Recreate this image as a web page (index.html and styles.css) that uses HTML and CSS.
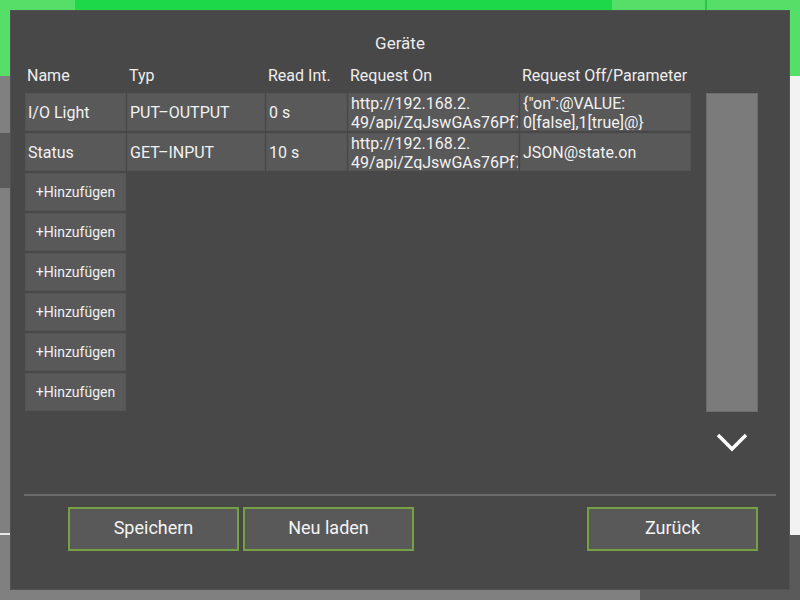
FILE: index.html
```html
<!DOCTYPE html>
<html lang="de">
<head>
    <meta charset="UTF-8">
    <title>Geräte</title>
    <link rel="stylesheet" href="styles.css">
</head>
<body>
    <div class="desk">
        <div class="bar-top"></div>
        <div class="bar-top-active"></div>
        <div class="bar-top-sep"></div>
        <div class="side-left"></div>
        <div class="side-left-line"></div>
        <div class="side-right"></div>
        <div class="side-right-low"></div>

        <div class="dialog">
            <div class="title">Geräte</div>

            <div class="table-head">
                <div class="th">Name</div>
                <div class="th">Typ</div>
                <div class="th">Read Int.</div>
                <div class="th">Request On</div>
                <div class="th">Request Off/Parameter</div>
            </div>

            <div class="table-area">
                <div class="table">
                    <div class="cell">I/O Light</div>
                    <div class="cell">PUT–OUTPUT</div>
                    <div class="cell">0 s</div>
                    <div class="cell cell-multi"><span>http://192.168.2.</span><span>49/api/ZqJswGAs76Pf7</span></div>
                    <div class="cell cell-multi"><span>{"on":@VALUE:</span><span>0[false],1[true]@}</span></div>

                    <div class="cell">Status</div>
                    <div class="cell">GET–INPUT</div>
                    <div class="cell">10 s</div>
                    <div class="cell cell-multi"><span>http://192.168.2.</span><span>49/api/ZqJswGAs76Pf7</span></div>
                    <div class="cell">JSON@state.on</div>

                    <div class="cell add">+Hinzufügen</div>
                    <div class="cell add">+Hinzufügen</div>
                    <div class="cell add">+Hinzufügen</div>
                    <div class="cell add">+Hinzufügen</div>
                    <div class="cell add">+Hinzufügen</div>
                    <div class="cell add">+Hinzufügen</div>
                </div>

                <div class="scroll-col">
                    <div class="scrollbar"></div>
                    <svg class="chevron" width="32" height="20" viewBox="0 0 32 20">
                        <polyline points="2,2 16,16 30,2" fill="none" stroke="#fff" stroke-width="3.5"/>
                    </svg>
                </div>
            </div>

            <div class="separator"></div>

            <div class="buttons">
                <button class="btn">Speichern</button>
                <button class="btn">Neu laden</button>
                <span class="spacer"></span>
                <button class="btn">Zurück</button>
            </div>
        </div>
    </div>
</body>
</html>
```

FILE: styles.css
```css
body {
    margin: 0;
    padding: 0;
    background-color: #808080;
    font-family: Roboto, "Liberation Sans", sans-serif;
    color: #f2f2f2;
}
.desk {
    position: relative;
    width: 800px;
    height: 600px;
    overflow: hidden;
}
/* hintergrund fenster */
.bar-top {
    position: absolute;
    left: 0;
    top: 0;
    width: 800px;
    height: 76px;
    background-color: #56df68;
}
.bar-top-active {
    position: absolute;
    left: 75px;
    top: 0;
    width: 537px;
    height: 76px;
    background-color: #1ed947;
}
.bar-top-sep {
    position: absolute;
    left: 705px;
    top: 0;
    width: 2px;
    height: 76px;
    background-color: #2ec646;
}
.side-left {
    position: absolute;
    left: 0;
    top: 133px;
    width: 10px;
    height: 55px;
    background-color: #5b5b5b;
}
.side-left-line {
    position: absolute;
    left: 0;
    top: 533px;
    width: 10px;
    height: 2px;
    background-color: #e8e8e8;
}
.side-right {
    position: absolute;
    left: 790px;
    top: 76px;
    width: 10px;
    height: 459px;
    background-color: #f2f2f2;
}
.side-right-low {
    position: absolute;
    left: 640px;
    top: 535px;
    width: 160px;
    height: 65px;
    background-color: #5a5a5a;
}
/* dialog */
.dialog {
    position: absolute;
    left: 10px;
    top: 10px;
    width: 780px;
    height: 580px;
    box-sizing: border-box;
    background-color: #484848;
    border: 1px solid #525252;
    padding: 0 13px;
    display: flex;
    flex-direction: column;
}
.title {
    margin-top: 21px;
    height: 22px;
    line-height: 22px;
    text-align: center;
    font-size: 17px;
    color: #ececec;
}
.table-head {
    margin-top: 11px;
    margin-left: 1px;
    height: 22px;
    display: grid;
    grid-template-columns: 101px 138px 81px 171px 171px;
    column-gap: 1px;
}
.th {
    padding-left: 2px;
    font-size: 16px;
    line-height: 22px;
    white-space: nowrap;
    color: #eeeeee;
}
.table-area {
    margin-top: 6px;
    margin-left: 1px;
    height: 401px;
    display: flex;
}
.table {
    display: grid;
    grid-template-columns: 101px 138px 81px 171px 171px;
    grid-auto-rows: 38px;
    column-gap: 1px;
    row-gap: 2px;
    align-content: start;
}
.cell {
    box-sizing: border-box;
    background-color: #595959;
    border: 1px solid #555555;
    padding-left: 2px;
    font-size: 16px;
    display: flex;
    align-items: center;
    white-space: nowrap;
    overflow: hidden;
}
.cell-multi {
    flex-direction: column;
    align-items: flex-start;
    justify-content: flex-start;
    line-height: 19px;
}
.add {
    grid-column: 1;
    justify-content: center;
    padding-left: 0;
    font-size: 14px;
}
.scroll-col {
    margin-left: 15px;
    width: 52px;
    display: flex;
    flex-direction: column;
    align-items: center;
}
.scrollbar {
    width: 52px;
    height: 319px;
    box-sizing: border-box;
    background-color: #7b7b7b;
    border: 1px solid #6c6c6c;
}
.chevron {
    margin-top: 21px;
}
.separator {
    height: 2px;
    background-color: #6a6a6a;
}
.buttons {
    margin-top: 11px;
    padding: 0 18px 0 44px;
    display: flex;
    gap: 4px;
}
.spacer {
    flex: 1;
}
.btn {
    width: 171px;
    height: 44px;
    box-sizing: border-box;
    background-color: #595959;
    border: 2px solid #76a044;
    color: #f4f4f4;
    font-family: Roboto, "Liberation Sans", sans-serif;
    font-size: 18px;
    padding: 0 0 4px 0;
}
```
